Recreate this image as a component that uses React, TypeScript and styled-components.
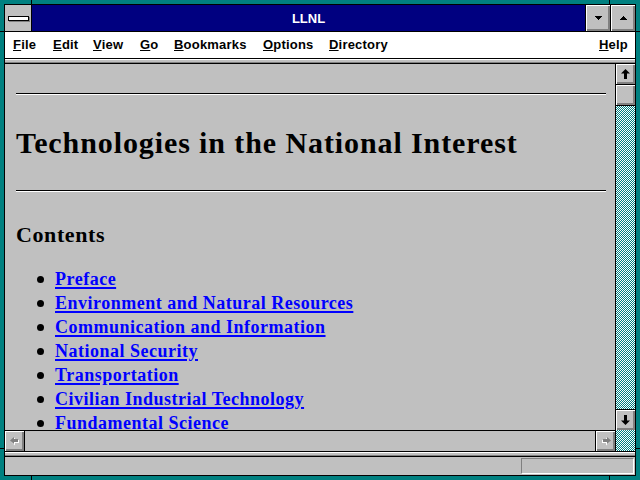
import React from 'react'
import styled, { createGlobalStyle } from 'styled-components'

const GlobalStyle = createGlobalStyle`
  html, body {
    margin: 0;
    padding: 0;
    background: #008080;
  }
  body {
    width: 640px;
    height: 480px;
    overflow: hidden;
  }
`

const menuItems = [
  { label: 'File', w: 40 },
  { label: 'Edit', w: 40 },
  { label: 'View', w: 47 },
  { label: 'Go', w: 34 },
  { label: 'Bookmarks', w: 89 },
  { label: 'Options', w: 66 },
  { label: 'Directory', w: 80 },
]

const contents = [
  'Preface',
  'Environment and Natural Resources',
  'Communication and Information',
  'National Security',
  'Transportation',
  'Civilian Industrial Technology',
  'Fundamental Science',
]

const raised = `
  background: #c0c0c0;
  box-shadow: inset 1px 1px #fff, inset -1px -1px #808080, inset -2px -2px #808080;
`

const checker = `
  background: repeating-conic-gradient(#008080 0 25%, #ffffff 0 50%) 0 0 / 2px 2px;
`

// teal frame with the little black notches of the sizing border
const Frame = styled.div`
  width: 640px;
  height: 480px;
  box-sizing: border-box;
  padding: 4px;
  background:
    linear-gradient(#000, #000) 31px 0 / 1px 4px no-repeat,
    linear-gradient(#000, #000) 609px 0 / 1px 4px no-repeat,
    linear-gradient(#000, #000) 31px 100% / 1px 4px no-repeat,
    linear-gradient(#000, #000) 609px 100% / 1px 4px no-repeat,
    linear-gradient(#000, #000) 0 31px / 4px 1px no-repeat,
    linear-gradient(#000, #000) 100% 31px / 4px 1px no-repeat,
    linear-gradient(#000, #000) 0 448px / 4px 1px no-repeat,
    linear-gradient(#000, #000) 100% 448px / 4px 1px no-repeat,
    #008080;
`

const Window = styled.div`
  height: 100%;
  box-sizing: border-box;
  border: 1px solid #000;
  background: #c0c0c0;
  display: flex;
  flex-direction: column;
  font-family: 'Liberation Sans', Arial, sans-serif;
`

const TitleBar = styled.div`
  height: 27px;
  box-sizing: border-box;
  border-bottom: 1px solid #000;
  display: flex;
`

const SysMenu = styled.div`
  width: 27px;
  box-sizing: border-box;
  border-right: 1px solid #000;
  background: #c0c0c0;
  display: flex;
  align-items: center;
  justify-content: center;
`

const SysBar = styled.span`
  width: 19px;
  height: 3px;
  background: #fff;
  border: 1px solid #000;
  box-shadow: 1px 1px #808080;
  margin-top: 1px;
`

const Caption = styled.div`
  flex: 1;
  background: #000080;
  color: #fff;
  font-weight: bold;
  font-size: 13px;
  display: flex;
  align-items: center;
  justify-content: center;
`

const CapButton = styled.div<{ $w: number }>`
  width: ${(p) => p.$w}px;
  box-sizing: border-box;
  border-left: 1px solid #000;
  ${raised}
  display: flex;
  align-items: center;
  justify-content: center;
`

const MenuBar = styled.div`
  height: 27px;
  box-sizing: border-box;
  border-bottom: 1px solid #000;
  background: #fff;
  display: flex;
  align-items: center;
  padding: 0 7px 0 8px;
  font-size: 13px;
  font-weight: bold;
  color: #000;
`

const MenuItem = styled.span<{ $w?: number }>`
  width: ${(p) => (p.$w ? `${p.$w}px` : 'auto')};
  line-height: 26px;
  white-space: nowrap;
  letter-spacing: 0.2px;
  &:last-child {
    margin-left: auto;
  }
  u {
    text-underline-offset: 1px;
  }
`

const Band = styled.div`
  height: 5px;
  flex: none;
  box-sizing: border-box;
  border-bottom: 1px solid #000;
  background: #c0c0c0;
  box-shadow: inset 0 1px #fff, inset 0 -1px #808080;
`

const Body = styled.div`
  height: 388px;
  flex: none;
  box-sizing: border-box;
  border-bottom: 1px solid #000;
  display: flex;
`

const ViewColumn = styled.div`
  flex: 1;
  display: flex;
  flex-direction: column;
  min-width: 0;
`

const Page = styled.div`
  flex: 1;
  overflow: hidden;
  padding: 0 9px 0 11px;
  font-family: 'Liberation Serif', 'Times New Roman', serif;
  color: #000;
`

const Rule = styled.hr<{ $top: number }>`
  margin: ${(p) => p.$top}px 0 0;
  height: 0;
  border: 0;
  border-top: 1px solid #000;
  border-bottom: 1px solid #fff;
`

const Title = styled.h1`
  margin: 31px 0 0;
  font-size: 30px;
  line-height: 34px;
  font-weight: bold;
  letter-spacing: 0.9px;
  white-space: nowrap;
`

const Heading = styled.h2`
  margin: 30px 0 0;
  font-size: 22px;
  line-height: 26px;
  font-weight: bold;
  letter-spacing: 0.6px;
`

const List = styled.ul`
  margin: 19px 0 0;
  padding: 0 0 0 21px;
  list-style: none;
`

const Item = styled.li`
  display: flex;
  align-items: center;
  gap: 11px;
  height: 24px;
  font-size: 18px;
  line-height: 24px;
  font-weight: bold;
  letter-spacing: 0.5px;
  white-space: nowrap;
`

const Bullet = styled.span`
  width: 7px;
  height: 7px;
  border-radius: 50%;
  background: #000;
  flex: none;
`

const Link = styled.a`
  color: #0000ff;
  text-decoration: underline;
  text-decoration-thickness: 2px;
  text-underline-offset: 2px;
`

const HScroll = styled.div`
  height: 21px;
  flex: none;
  box-sizing: border-box;
  border-top: 1px solid #000;
  display: flex;
`

const HButton = styled.div<{ $side: 'left' | 'right' }>`
  width: 20px;
  box-sizing: border-box;
  ${(p) => (p.$side === 'left' ? 'border-right' : 'border-left')}: 1px solid #000;
  ${raised}
  display: flex;
  align-items: center;
  justify-content: center;
`

const HTrack = styled.div`
  flex: 1;
  background: #c0c0c0;
`

const VScroll = styled.div`
  width: 20px;
  flex: none;
  box-sizing: border-box;
  border-left: 1px solid #000;
  display: flex;
  flex-direction: column;
`

const VButton = styled.div<{ $edge: 'top' | 'bottom' }>`
  height: 21px;
  flex: none;
  box-sizing: border-box;
  ${(p) => (p.$edge === 'top' ? 'border-top' : 'border-bottom')}: 1px solid #000;
  ${raised}
  display: flex;
  align-items: center;
  justify-content: center;
`

const VTrack = styled.div`
  flex: 1;
  ${checker}
`

const Corner = styled.div`
  height: 21px;
  flex: none;
  ${checker}
`

const StatusBar = styled.div`
  flex: 1;
  display: flex;
  align-items: center;
  justify-content: flex-end;
  padding-right: 1px;
`

const StatusBox = styled.div`
  width: 113px;
  height: 16px;
  box-sizing: border-box;
  border: 1px solid;
  border-color: #808080 #fff #fff #808080;
`

function Triangle({ up }: { up?: boolean }) {
  return (
    <svg width="7" height="4" viewBox="0 0 7 4" shapeRendering="crispEdges">
      <polygon points={up ? '3.5,0 7,4 0,4' : '0,0 7,0 3.5,4'} fill="#000" />
    </svg>
  )
}

function VArrow({ down }: { down?: boolean }) {
  return (
    <svg width="9" height="10" viewBox="0 0 9 10" style={{ transform: down ? 'scaleY(-1)' : undefined }}>
      <polygon points="4.5,0 9,4.5 6,4.5 6,10 3,10 3,4.5 0,4.5" fill="#000" />
    </svg>
  )
}

function HArrow({ right }: { right?: boolean }) {
  return (
    <svg width="10" height="9" viewBox="0 0 10 9" style={{ transform: right ? 'scaleX(-1)' : undefined }}>
      <polygon points="1,4.5 5,0.5 5,3 9,3 9,6 5,6 5,8.5" fill="#fff" />
      <polygon points="0,3.5 4,0 4,2 8,2 8,5 4,5 4,7" fill="#808080" />
    </svg>
  )
}

export default function App() {
  return (
    <>
      <GlobalStyle />
      <Frame>
        <Window>
          <TitleBar>
            <SysMenu>
              <SysBar />
            </SysMenu>
            <Caption>LLNL</Caption>
            <CapButton $w={25}>
              <Triangle />
            </CapButton>
            <CapButton $w={25}>
              <Triangle up />
            </CapButton>
          </TitleBar>

          <MenuBar>
            {menuItems.map((m) => (
              <MenuItem key={m.label} $w={m.w}>
                <u>{m.label[0]}</u>
                {m.label.slice(1)}
              </MenuItem>
            ))}
            <MenuItem>
              <u>H</u>elp
            </MenuItem>
          </MenuBar>

          <Band />

          <Body>
            <ViewColumn>
              <Page>
                <Rule $top={29} />
                <Title>Technologies in the National Interest</Title>
                <Rule $top={30} />
                <Heading>Contents</Heading>
                <List>
                  {contents.map((c) => (
                    <Item key={c}>
                      <Bullet />
                      <Link href="#">{c}</Link>
                    </Item>
                  ))}
                </List>
              </Page>
              <HScroll>
                <HButton $side="left">
                  <HArrow />
                </HButton>
                <HTrack />
                <HButton $side="right">
                  <HArrow right />
                </HButton>
              </HScroll>
            </ViewColumn>
            <VScroll>
              <VButton $edge="bottom">
                <VArrow />
              </VButton>
              <VButton $edge="bottom" />
              <VTrack />
              <VButton $edge="top">
                <VArrow down />
              </VButton>
              <Corner />
            </VScroll>
          </Body>

          <Band />

          <StatusBar>
            <StatusBox />
          </StatusBar>
        </Window>
      </Frame>
    </>
  )
}
